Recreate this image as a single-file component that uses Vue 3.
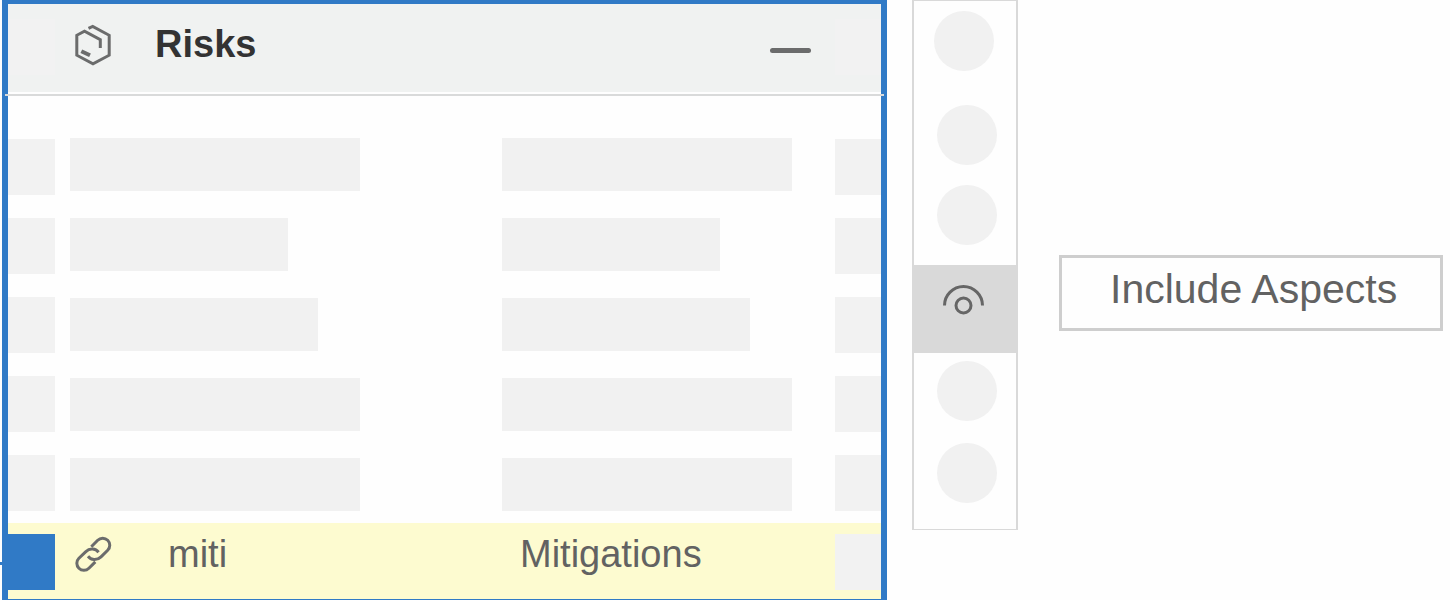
<script setup>
const barWidths = [290, 218, 248, 290, 290]
const topTools = 3
const bottomTools = 2
</script>

<template>
  <main class="page">
    <section class="panel" aria-labelledby="panel-title">
      <header class="panel-header">
        <span class="port"></span>
        <svg class="icon" viewBox="0 0 40 42" aria-hidden="true">
          <path d="M15.5 4.3 19.7 2.4 36.2 11.3V31.2L20 39.8 3.8 31.2V11.3L11.5 7.2 27.3 15.6V24" />
          <path class="thick" d="M8.3 27.2 17 31.3" />
        </svg>
        <h1 id="panel-title">Risks</h1>
        <button class="collapse" type="button" aria-label="Collapse"><span></span></button>
        <span class="port end"></span>
      </header>

      <div class="rows">
        <div class="ports">
          <span v-for="n in 5" :key="n" class="port"></span>
        </div>
        <div class="bars">
          <template v-for="(w, i) in barWidths" :key="i">
            <span class="bar" :style="{ width: w + 'px' }"></span>
            <span class="bar" :style="{ width: w + 'px' }"></span>
          </template>
        </div>
        <div class="ports">
          <span v-for="n in 5" :key="n" class="port end"></span>
        </div>
      </div>

      <div class="linked">
        <span class="port active"></span>
        <div class="linked-cells">
          <div class="name">
            <svg class="icon" viewBox="0 0 40 42" aria-hidden="true">
              <path d="M18.3 12.7 24.7 6.3A7 7 0 0 1 34.7 16.3L28 22.8C23.5 27 18 26 15 22.3" />
              <path transform="rotate(180 20.3 20.3)" d="M18.3 12.7 24.7 6.3A7 7 0 0 1 34.7 16.3L28 22.8C23.5 27 18 26 15 22.3" />
            </svg>
            <span>miti</span>
          </div>
          <div class="target">Mitigations</div>
        </div>
        <span class="port end"></span>
      </div>
      <span class="connector"></span>
    </section>

    <nav class="toolbar" aria-label="Tools">
      <span v-for="n in topTools" :key="n" class="dot"></span>
      <button class="selected" type="button" aria-label="Include Aspects">
        <svg viewBox="0 0 42 32" aria-hidden="true">
          <path d="M1.5 21.5a19 19 0 0 1 38 0" />
          <circle cx="20.5" cy="21.5" r="7.5" />
        </svg>
      </button>
      <span v-for="n in bottomTools" :key="n" class="dot lower"></span>
    </nav>

    <div class="tip" role="tooltip">Include Aspects</div>
  </main>
</template>

<style>
body {
  background: #fefefe;
}
</style>

<style scoped>
.page {
  display: flex;
  align-items: flex-start;
  padding: 0 7px 0 2px;
  font-family: "Liberation Sans", Arial, sans-serif;
  color: #626262;
  overflow: hidden;
}
.page * {
  box-sizing: border-box;
}
.panel {
  position: relative;
  flex: 1;
  border: 6px solid #307ac6;
  border-top-width: 4px;
  border-bottom-width: 1px;
}
.panel-header {
  position: relative;
  display: flex;
  align-items: flex-start;
  height: 92px;
  padding-top: 15px;
  background: linear-gradient(#f0f2f1 88px, #fefefe 88px);
}
.panel-header::after {
  content: "";
  position: absolute;
  left: -3px;
  right: -3px;
  bottom: 0;
  height: 2px;
  background: #d9dada;
}
.port {
  flex: none;
  width: 47px;
  height: 56px;
  background: #f2f2f2;
}
.port.end {
  width: 46px;
}
.icon {
  flex: none;
  width: 40px;
  height: 42px;
  fill: none;
  stroke: #6b6c6c;
  stroke-width: 3;
}
.icon .thick {
  stroke-width: 4;
}
.panel-header .icon {
  margin: 5px 42px 0 18px;
}
h1 {
  flex: 1;
  margin: 5px 0 0;
  font-size: 38px;
  line-height: 40px;
  font-weight: bold;
  color: #333;
}
button {
  border: 0;
  padding: 0;
  background: none;
  cursor: pointer;
}
.collapse {
  margin: 19px 24px 0 0;
  padding: 10px 0;
}
.collapse span {
  display: block;
  width: 41px;
  height: 5px;
  border-radius: 3px;
  background: #6b6c6c;
}
.rows {
  display: flex;
  padding: 42px 0 12px;
}
.ports {
  display: flex;
  flex-direction: column;
  gap: 23px;
  padding-top: 1px;
}
.bars {
  flex: 1;
  display: grid;
  grid-template-columns: 432fr 333fr;
  row-gap: 27px;
  align-content: start;
  padding-left: 15px;
}
.bar {
  height: 53px;
  background: #f1f1f1;
}
.linked {
  display: flex;
  align-items: flex-start;
  height: 76px;
  padding-top: 11px;
  background: #fdfbd0;
}
.port.active {
  background: #307ac6;
}
.linked-cells {
  flex: 1;
  display: grid;
  grid-template-columns: 432fr 333fr;
  padding-left: 15px;
  font-size: 38px;
  line-height: 40px;
}
.name {
  display: flex;
  gap: 55px;
  padding-left: 3px;
}
.target {
  padding-left: 18px;
}
.connector {
  position: absolute;
  left: -8px;
  bottom: 34px;
  width: 2px;
  height: 3px;
  background: #307ac6;
}
.toolbar {
  display: flex;
  flex-direction: column;
  align-items: center;
  width: 106px;
  margin-left: 25px;
  padding: 10px 0 26px;
  border: solid #d9d9d9;
  border-width: 1px 2px;
}
.dot {
  width: 60px;
  height: 60px;
  margin: 0 0 20px 4px;
  border-radius: 50%;
  background: #f1f1f1;
}
.dot:first-child {
  margin: 0 2px 34px 0;
}
.selected {
  display: flex;
  justify-content: center;
  align-self: stretch;
  height: 88px;
  margin-bottom: 8px;
  padding: 19px 2px 0 0;
  background: #d9d9d9;
}
.selected svg {
  width: 42px;
  height: 32px;
  fill: none;
  stroke: #666;
  stroke-width: 3;
}
.dot.lower {
  margin-bottom: 22px;
}
.dot.lower:last-child {
  margin-bottom: 0;
}
.tip {
  width: 384px;
  margin: 255px 0 0 41px;
  padding: 7px 0 15px 48px;
  border: 3px solid #cecece;
  font-size: 41px;
  line-height: 48px;
  white-space: nowrap;
}
</style>
